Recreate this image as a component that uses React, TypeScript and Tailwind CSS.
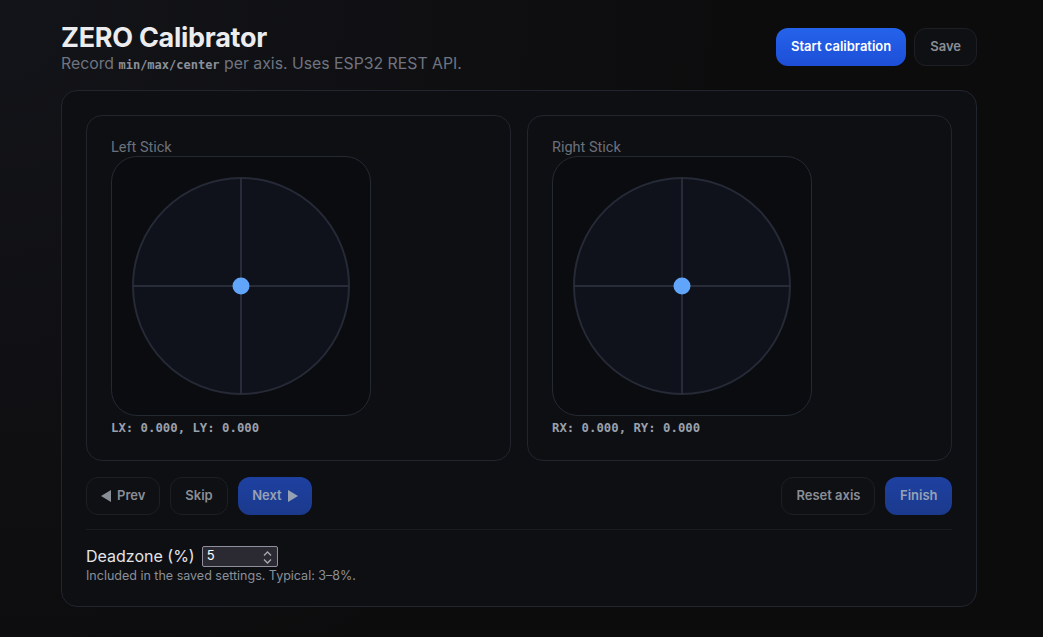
import React from "react";

function Stick({ label, xl, yl }: { label: string; xl: string; yl: string }) {
  return (
    <div className="flex-1 rounded-2xl border border-[#22252e] bg-[#0e0f13] p-6">
      <div className="text-[14.5px] leading-4 text-[#6b717c]" style={{ fontFamily: "Roboto, sans-serif" }}>
        {label}
      </div>
      <div className="w-[260px] h-[260px] rounded-[26px] border border-[#252934] bg-[#0b0c10]">
        <svg width="258" height="258" viewBox="0 0 258 258" className="block">
          <circle cx="129" cy="129" r="108" fill="#0f121a" stroke="#262a37" strokeWidth="2" />
          <line x1="129" y1="21" x2="129" y2="237" stroke="#282c39" strokeWidth="2" />
          <line x1="21" y1="129" x2="237" y2="129" stroke="#282c39" strokeWidth="2" />
          <circle cx="129" cy="129" r="8.5" fill="#60a5fa" />
        </svg>
      </div>
      <div
        className="mt-1 text-[12.3px] leading-4 font-bold text-[#9aa1ad]"
        style={{ fontFamily: '"DejaVu Sans Mono", monospace' }}
      >
        {xl}: 0.000, {yl}: 0.000
      </div>
    </div>
  );
}

function TriLeft() {
  return (
    <svg width="10" height="12" viewBox="0 0 10 12" className="inline-block">
      <path d="M10 0 L0 6 L10 12 Z" fill="currentColor" />
    </svg>
  );
}
function TriRight() {
  return (
    <svg width="10" height="12" viewBox="0 0 10 12" className="inline-block">
      <path d="M0 0 L10 6 L0 12 Z" fill="currentColor" />
    </svg>
  );
}

const ghost =
  "h-[38px] rounded-xl border border-[#1d1f25] bg-[#0f1013] px-[14px] text-[13px] font-semibold text-[#8a8e96] flex items-center gap-1.5";
const blueDim =
  "h-[38px] rounded-xl bg-gradient-to-b from-[#1e40a0] to-[#1b3a8d] px-[14.5px] text-[13px] font-semibold text-[#97a1b5] flex items-center gap-1.5";

export default function App() {
  return (
    <div
      className="min-h-[637px] w-full bg-[radial-gradient(circle_at_0%_0%,#131419_0%,#0c0c0d_60%)] text-[#e5e7eb]"
      style={{ fontFamily: "Inter, sans-serif" }}
    >
      <div className="ml-[61px] w-[916px] pt-[22px]">
        <div className="flex items-start justify-between">
          <div>
            <h1 className="text-[27px] leading-8 font-bold text-[#ececef] tracking-[-0.01em]">ZERO Calibrator</h1>
            <p className="text-[15.8px] leading-5 text-[#6f7480]">
              Record{" "}
              <code className="text-xs font-bold text-[#8b909a]" style={{ fontFamily: '"DejaVu Sans Mono", monospace' }}>
                min/max/center
              </code>{" "}
              per axis. Uses ESP32 REST API.
            </p>
          </div>
          <div className="flex gap-2 mt-[6px]">
            <button className="h-[38px] rounded-xl bg-gradient-to-b from-[#2563eb] to-[#1d4ed8] px-[15px] text-[13px] font-semibold text-white">
              Start calibration
            </button>
            <button className="h-[38px] rounded-xl border border-[#1d1f25] bg-[#0f1013] px-[15px] text-[13px] font-semibold text-[#8a8e96]">
              Save
            </button>
          </div>
        </div>

        <div className="mt-4 rounded-2xl border border-[#22252e] bg-[#0e0f13] px-6 pt-6 pb-[22px]">
          <div className="flex gap-4">
            <Stick label="Left Stick" xl="LX" yl="LY" />
            <Stick label="Right Stick" xl="RX" yl="RY" />
          </div>

          <div className="mt-4 flex items-center justify-between">
            <div className="flex gap-2.5">
              <button className={ghost}>
                <TriLeft />
                Prev
              </button>
              <button className={ghost}>Skip</button>
              <button className={blueDim}>
                Next
                <TriRight />
              </button>
            </div>
            <div className="flex gap-2.5">
              <button className={ghost}>Reset axis</button>
              <button className={blueDim}>Finish</button>
            </div>
          </div>

          <div className="mt-[14px] border-t border-[#1a1c22] pt-[14px]">
            <div className="flex items-center gap-[7px]">
              <span className="text-base leading-6 text-[#e4e5e8]">Deadzone (%)</span>
              <div className="relative h-[21px] w-[76px] border border-[#8f8f9d] bg-[#2b2a33] rounded-[2px] flex items-center">
                <span className="pl-[4px] text-[13px] text-white">5</span>
                <svg
                  className="absolute right-[5px] top-[4px]"
                  width="9"
                  height="13"
                  viewBox="0 0 9 13"
                  fill="none"
                  stroke="#a9a9b3"
                  strokeWidth="1.3"
                >
                  <path d="M1 4.5 L4.5 1 L8 4.5" />
                  <path d="M1 8.5 L4.5 12 L8 8.5" />
                </svg>
              </div>
            </div>
            <div className="text-[12.5px] leading-4 text-[#8b8f98]">Included in the saved settings. Typical: 3–8%.</div>
          </div>
        </div>
      </div>
    </div>
  );
}
